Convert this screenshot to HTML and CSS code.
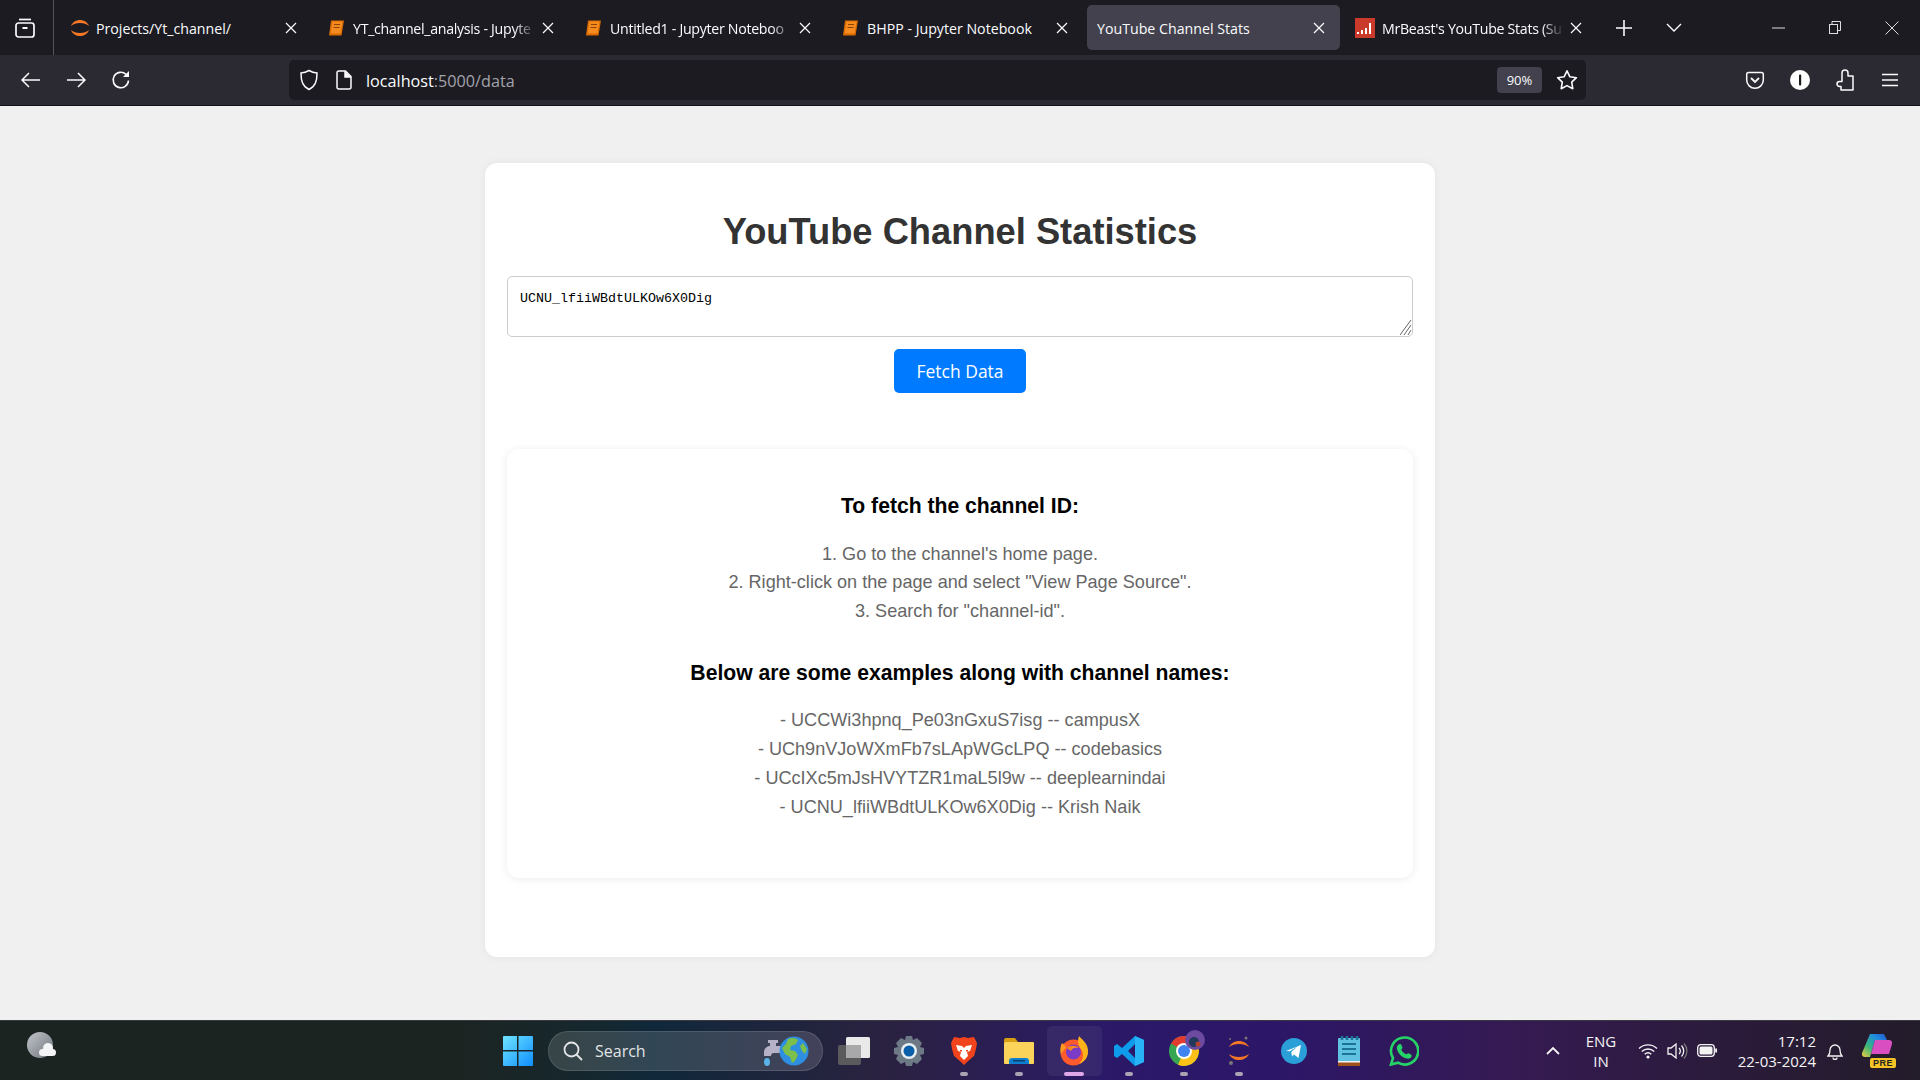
FILE: index.html
```html
<!DOCTYPE html>
<html lang="en">
<head>
<meta charset="utf-8">
<title>YouTube Channel Stats</title>
<link rel="stylesheet" href="styles.css">
</head>
<body>
<div class="tabbar">
  <div class="tabview">
    <svg width="22" height="22" viewBox="0 0 22 22" fill="none" stroke="#fbfbfe" stroke-width="1.7"><path d="M5 2.500h12"/><rect x="2" y="6" width="18" height="14" rx="2.500"/><path d="M8.500 11h5" stroke-width="2"/></svg>
  </div>
  <div class="tabs">
    <div class="tab">
      <svg class="fav" width="20" height="20" viewBox="0 0 20 20" fill="#f37726"><path d="M1 8C4 0 16 0 19 8 15 4 5 4 1 8z"/><path d="M1 12C4 20 16 20 19 12 15 16 5 16 1 12z"/></svg>
      <span class="title">Projects/Yt_channel/</span>
      <svg class="close" width="12" height="12" viewBox="0 0 12 12" stroke="#fbfbfe" stroke-width="1.200"><path d="M1 1l10 10M11 1L1 11"/></svg>
    </div>
    <div class="tab">
      <svg class="fav" width="20" height="20" viewBox="0 0 20 20"><path d="M4 2.500h13l-2.500 15H2z" fill="#d96a00"/><path d="M5.500 3.500h10l-2 12h-10z" fill="#f58a1f"/><path d="M7 6.500h6M6.500 9.500h6" stroke="#8c4300" stroke-width="1"/></svg>
      <span class="title fade">YT_channel_analysis - Jupyte</span>
      <svg class="close" width="12" height="12" viewBox="0 0 12 12" stroke="#fbfbfe" stroke-width="1.200"><path d="M1 1l10 10M11 1L1 11"/></svg>
    </div>
    <div class="tab">
      <svg class="fav" width="20" height="20" viewBox="0 0 20 20"><path d="M4 2.500h13l-2.500 15H2z" fill="#d96a00"/><path d="M5.500 3.500h10l-2 12h-10z" fill="#f58a1f"/><path d="M7 6.500h6M6.500 9.500h6" stroke="#8c4300" stroke-width="1"/></svg>
      <span class="title fade">Untitled1 - Jupyter Noteboo</span>
      <svg class="close" width="12" height="12" viewBox="0 0 12 12" stroke="#fbfbfe" stroke-width="1.200"><path d="M1 1l10 10M11 1L1 11"/></svg>
    </div>
    <div class="tab">
      <svg class="fav" width="20" height="20" viewBox="0 0 20 20"><path d="M4 2.500h13l-2.500 15H2z" fill="#d96a00"/><path d="M5.500 3.500h10l-2 12h-10z" fill="#f58a1f"/><path d="M7 6.500h6M6.500 9.500h6" stroke="#8c4300" stroke-width="1"/></svg>
      <span class="title">BHPP - Jupyter Notebook</span>
      <svg class="close" width="12" height="12" viewBox="0 0 12 12" stroke="#fbfbfe" stroke-width="1.200"><path d="M1 1l10 10M11 1L1 11"/></svg>
    </div>
    <div class="tab tab-active">
      <span class="title">YouTube Channel Stats</span>
      <svg class="close" width="12" height="12" viewBox="0 0 12 12" stroke="#fbfbfe" stroke-width="1.200"><path d="M1 1l10 10M11 1L1 11"/></svg>
    </div>
    <div class="tab">
      <svg class="fav fav-wide" width="20" height="20" viewBox="0 0 20 20"><rect width="20" height="20" fill="#c93a2b"/><path d="M2 14h2v2H2zM6 12h2v4H6zM10 10h2v6h-2zM14 5h2v11h-2z" fill="#fff"/></svg>
      <span class="title fade">MrBeast's YouTube Stats (Su</span>
      <svg class="close" width="12" height="12" viewBox="0 0 12 12" stroke="#fbfbfe" stroke-width="1.200"><path d="M1 1l10 10M11 1L1 11"/></svg>
    </div>
  </div>
  <div class="tabctl tabctl-plus">
    <svg width="16" height="16" viewBox="0 0 16 16" stroke="#fbfbfe" stroke-width="1.600"><path d="M8 0v16M0 8h16"/></svg>
  </div>
  <div class="tabctl tabctl-more">
    <svg width="16" height="10" viewBox="0 0 16 10" fill="none" stroke="#fbfbfe" stroke-width="1.400"><path d="M1 1l7 7 7-7"/></svg>
  </div>
  <div class="winctl">
    <div class="winbtn"><svg width="13" height="2" viewBox="0 0 13 2" stroke="#ddd" stroke-width="1"><path d="M0 1h13"/></svg></div>
    <div class="winbtn"><svg width="12" height="14" viewBox="0 0 12 14" fill="none" stroke="#ddd" stroke-width="1"><rect x="0.500" y="3.500" width="8" height="9"/><path d="M3 3V.5h8.500v9H9"/></svg></div>
    <div class="winbtn"><svg width="14" height="14" viewBox="0 0 14 14" stroke="#ddd" stroke-width="1"><path d="M.5.5l13 13M13.500.5l-13 13"/></svg></div>
  </div>
</div>

<div class="toolbar">
  <div class="navbtn"><svg width="20" height="16" viewBox="0 0 20 16" fill="none" stroke="#fbfbfe" stroke-width="1.500"><path d="M19 8H1M8 1L1 8l7 7"/></svg></div>
  <div class="navbtn"><svg width="20" height="16" viewBox="0 0 20 16" fill="none" stroke="#fbfbfe" stroke-width="1.500"><path d="M1 8h18M12 1l7 7-7 7"/></svg></div>
  <div class="navbtn"><svg width="20" height="20" viewBox="0 0 20 20" fill="none" stroke="#fbfbfe" stroke-width="1.600"><path d="M17.500 10.500A7.700 7.700 0 1 1 15 4.300"/><path d="M18 1v6h-6z" fill="#fbfbfe" stroke="none"/></svg></div>
  <div class="urlbar">
    <svg class="url-shield" width="20" height="22" viewBox="0 0 20 22" fill="none" stroke="#fbfbfe" stroke-width="1.500"><path d="M10 1.500c3 1.800 5 2.300 8 2.500 0 8-1.500 13-8 16.500C3.500 17 2 12 2 4c3-.2 5-.7 8-2.500z"/></svg>
    <svg class="url-doc" width="16" height="20" viewBox="0 0 16 20" fill="none" stroke="#fbfbfe" stroke-width="1.500"><path d="M3 1h6.500L15 6.500V17a2 2 0 0 1-2 2H3a2 2 0 0 1-2-2V3a2 2 0 0 1 2-2z"/><path d="M9 1v6h6" fill="#fbfbfe"/></svg>
    <span class="url-text">localhost<span class="url-dim">:5000/data</span></span>
    <span class="zoom-badge">90%</span>
    <svg class="url-star" width="22" height="22" viewBox="0 0 22 22" fill="none" stroke="#fbfbfe" stroke-width="1.600" stroke-linejoin="round"><path d="M11 1.800l2.900 6 6.500.9-4.700 4.500 1.100 6.500L11 16.600l-5.800 3.100 1.100-6.500-4.700-4.500 6.500-.9z"/></svg>
  </div>
  <div class="extras">
    <div class="navbtn"><svg width="20" height="20" viewBox="0 0 20 20" fill="none" stroke="#fbfbfe" stroke-width="1.500"><path d="M3.500 2.500h13a1.800 1.800 0 0 1 1.800 1.800V10a8.300 8.300 0 0 1-16.600 0V4.300a1.800 1.800 0 0 1 1.800-1.800z"/><path d="M6 8l4 4 4-4" stroke-width="1.800"/></svg></div>
    <div class="navbtn"><svg width="20" height="20" viewBox="0 0 20 20"><circle cx="10" cy="10" r="10" fill="#fff"/><rect x="9" y="4.500" width="2.200" height="11" rx="1" fill="#1c1b22"/></svg></div>
    <div class="navbtn"><svg width="18" height="22" viewBox="0 0 18 22" fill="none" stroke="#fbfbfe" stroke-width="1.500" stroke-linejoin="round"><path d="M6 7V4a3 3 0 0 1 6 0v3h5v14H5v-3.500H3.500a2.500 2.500 0 0 1 0-5H6z"/></svg></div>
    <div class="navbtn"><svg width="16" height="14" viewBox="0 0 16 14" stroke="#fbfbfe" stroke-width="1.500"><path d="M0 1.500h16M0 7h16M0 12.500h16"/></svg></div>
  </div>
</div>

<main class="page">
  <section class="card">
    <h1 class="heading">YouTube Channel Statistics</h1>
    <div class="input-wrap">
      <textarea class="channel-input" spellcheck="false">UCNU_lfiiWBdtULKOw6X0Dig</textarea>
      <svg class="resizer" width="12" height="16" viewBox="0 0 12 16" stroke="#666" stroke-width="1"><path d="M0 16L11 1M4 16L11 6M8 16l3-5"/></svg>
    </div>
    <button class="fetch">Fetch Data</button>
    <div class="info">
      <h3 class="info-title">To fetch the channel ID:</h3>
      <p class="info-text">1. Go to the channel's home page.<br>2. Right-click on the page and select "View Page Source".<br>3. Search for "channel-id".</p>
      <h3 class="info-title info-title-2">Below are some examples along with channel names:</h3>
      <p class="info-text">- UCCWi3hpnq_Pe03nGxuS7isg -- campusX<br>- UCh9nVJoWXmFb7sLApWGcLPQ -- codebasics<br>- UCcIXc5mJsHVYTZR1maL5l9w -- deeplearnindai<br>- UCNU_lfiiWBdtULKOw6X0Dig -- Krish Naik</p>
    </div>
  </section>
</main>

<footer class="taskbar">
  <div class="tb-left">
    <svg width="30" height="28" viewBox="0 0 30 28"><defs><linearGradient id="moon" x1="0" y1="0" x2="1" y2="1"><stop offset="0" stop-color="#c2c6cb"/><stop offset="1" stop-color="#70757c"/></linearGradient></defs><ellipse cx="13" cy="13" rx="13" ry="13" fill="url(#moon)"/><circle cx="21" cy="16" r="5" fill="#f2f4f6"/><rect x="12" y="17" width="17" height="7" rx="3.500" fill="#f2f4f6"/></svg>
  </div>
  <div class="tb-start">
    <svg width="30" height="30" viewBox="0 0 30 30"><defs><linearGradient id="win" x1="0" y1="0" x2="1" y2="1"><stop offset="0" stop-color="#6fe4ff"/><stop offset="1" stop-color="#0f8fff"/></linearGradient></defs><path d="M0 1a1 1 0 0 1 1-1h13v14H0zM15.500 0H29a1 1 0 0 1 1 1v13H15.500zM0 15.500h14V30H1a1 1 0 0 1-1-1zM15.500 15.500H30V29a1 1 0 0 1-1 1H15.500z" fill="url(#win)"/></svg>
  </div>
  <div class="tb-search">
    <svg width="20" height="20" viewBox="0 0 20 20" fill="none" stroke="#e4e6e8" stroke-width="1.800"><circle cx="8.500" cy="8.500" r="7"/><path d="M13.500 13.500l5.500 5.500"/></svg>
    <span class="tb-search-text">Search</span>
    <svg class="tb-tap" width="50" height="32" viewBox="0 0 50 32"><path d="M3 18c0-5 3-7 6-7V8H7V5h10v3h-2v3h5v7h-7c-2 0-3 1-3 3H3z" fill="#b7b1c8"/><ellipse cx="6" cy="27" rx="3" ry="4" fill="#5ab4e8"/><circle cx="33" cy="16" r="14.500" fill="#2e8fe0"/><path d="M27 4c4-2 8-1 10 1l-2 4-5 2-1 4 5 1 3 4-3 6-3 2-2-6-5-3-3-6 4-4zM42 8l4 6-2 5-3-3-2-5z" fill="#7cbf4a"/></svg>
  </div>
  <div class="tb-apps">
    <div class="app"><svg width="32" height="28" viewBox="0 0 32 28"><rect x="0" y="8" width="23" height="20" rx="2" fill="#5a5a5c"/><rect x="8" y="0" width="24" height="21" rx="1.500" fill="#e9e9ea"/><rect x="8" y="8" width="15" height="13" fill="#a8a8aa"/></svg></div>
    <div class="app"><svg width="30" height="30" viewBox="0 0 30 30"><path d="M12 0h6l1 4 4-2 5 5-2 4 4 1v6l-4 1 2 4-5 5-4-2-1 4h-6l-1-4-4 2-5-5 2-4-4-1v-6l4-1-2-4 5-5 4 2z" fill="#6d7a85"/><circle cx="15" cy="15" r="8" fill="#e8eef2"/><circle cx="15" cy="15" r="5.500" fill="#0b5fa8"/></svg></div>
    <div class="app app-dot"><svg width="26" height="30" viewBox="0 0 26 30"><path d="M3 1l6 1 4-1 4 1 6-1 3 6-1 6-2 7-7 6-3 3-3-3-7-6-2-7-1-6z" fill="#f1431c"/><path d="M5 9l6 1 2 2 2-2 6-1-2 6-3 1 1 4-4 4-4-4 1-4-3-1z" fill="#fff"/><path d="M9 14h2v1.500H9zM15 14h2v1.500h-2z" fill="#f1431c"/></svg></div>
    <div class="app app-dot"><svg width="30" height="26" viewBox="0 0 30 26"><path d="M0 2a2 2 0 0 1 2-2h9l3 4h-14z" fill="#d89f10"/><rect y="4" width="30" height="22" rx="1" fill="#fbd35a"/><path d="M5 26v-3a3 3 0 0 1 3-3h14a3 3 0 0 1 3 3v3z" fill="#0f7fd0"/><rect x="9" y="22" width="12" height="1.500" fill="#063f6e"/></svg></div>
    <div class="app app-active">
      <svg width="30" height="30" viewBox="0 0 30 30"><circle cx="14.500" cy="16.500" r="13" fill="#ff5a2b"/><path d="M20 0c2 3 10 7 9 17-.5 5-4 9-9 11 4-4 5-9 3-13-1-3-6-6-3-15z" fill="#ffb21a"/><path d="M3 7c-2 3-2 8-1 11 2-2 3-5 5-6 0-2-2-3-4-5z" fill="#ff9a1f"/><circle cx="14.500" cy="16" r="7.500" fill="#7a3bc7"/><path d="M8 12c3-3 9-3 12 0-4-1-7 0-8 3-1-1-3-2-4-3z" fill="#ff8a1a"/></svg>
    </div>
    <div class="app app-dot"><svg width="30" height="30" viewBox="0 0 30 30"><path d="M21 0l9 4v22l-9 4L8 18l-5 4-3-2V10l3-2 5 4zM21 8l-7 7 7 7z" fill="#0e9bec"/><path d="M21 0l9 4v22l-9 4z" fill="#27b3f5"/></svg></div>
    <div class="app app-dot app-chrome"><svg width="40" height="36" viewBox="0 0 40 36"><circle cx="15" cy="21" r="15" fill="#36a651"/><path d="M15 21L28 13.500A15 15 0 0 1 9 34.700z" fill="#fbc116"/><path d="M15 21L2 13.500A15 15 0 0 1 28 13.500z" fill="#e33b2e"/><circle cx="15" cy="21" r="8" fill="#fff"/><circle cx="15" cy="21" r="6" fill="#3f83f0"/><circle cx="26" cy="10" r="10" fill="#6b4aa0"/><circle cx="25" cy="12" r="5" fill="#20385a"/><circle cx="29" cy="14" r="2.500" fill="#b3402f"/></svg></div>
    <div class="app app-dot"><svg width="24" height="30" viewBox="0 0 24 30" fill="#f37726"><path d="M2 11C6 3 18 3 22 11 17 7 7 7 2 11z"/><path d="M2 18C6 26 18 26 22 18 17 22 7 22 2 18z"/><circle cx="19" cy="2" r="1.500" fill="#767677"/><circle cx="3" cy="3" r="1" fill="#767677"/><circle cx="4" cy="27" r="2" fill="#767677"/></svg></div>
    <div class="app"><svg width="26" height="26" viewBox="0 0 26 26"><circle cx="13" cy="13" r="13" fill="#2a9fd8"/><path d="M5 13l15-6-2.500 13-4.500-3.500-2 2-.7-4.500 6-5.500-7.500 4.700z" fill="#fff"/></svg></div>
    <div class="app"><svg width="22" height="30" viewBox="0 0 22 30"><rect y="2" width="22" height="28" rx="1" fill="#5fc2e0"/><rect y="26" width="22" height="4" fill="#a0521c"/><rect y="25" width="22" height="1.500" fill="#f3f3f3"/><path d="M4 8h14M4 13h14M4 18h14" stroke="#1c7396" stroke-width="2"/><path d="M4 0v4M9 0v4M14 0v4M19 0v4" stroke="#1c7396" stroke-width="2.500"/></svg></div>
    <div class="app"><svg width="30" height="30" viewBox="0 0 30 30" fill="none"><path d="M15.500 1.500A13.500 13.500 0 0 0 4 22l-2 6.500 7-1.800A13.500 13.500 0 1 0 15.500 1.500z" stroke="#25d366" stroke-width="2.600"/><path d="M10.500 8c1.500-1 2.500 2.500 3 3.500.3 1-1.500 1.500-1 2.500 1 2 2.500 3.500 4.500 4.300 1 .3 1.500-1.500 2.500-1 1 .5 3.500 1.500 3.300 2.800-.3 2-3 3-5 2.500-5-1.200-9-5-10-10-.2-2 1-4 2.700-4.600z" fill="#25d366"/></svg></div>
  </div>
  <div class="tb-tray">
    <div class="tray-chev"><svg width="14" height="9" viewBox="0 0 14 9" fill="none" stroke="#f4f4f4" stroke-width="1.800"><path d="M1 8l6-6 6 6"/></svg></div>
    <div class="tray-lang">ENG<br>IN</div>
    <div class="tray-icons">
      <svg width="20" height="16" viewBox="0 0 20 16" fill="none" stroke="#f4f4f4" stroke-width="1.400"><path d="M1 5.500a13 13 0 0 1 18 0M3.800 8.500a9 9 0 0 1 12.400 0M6.700 11.300a5 5 0 0 1 6.600 0"/><circle cx="10" cy="14" r="1.600" fill="#f4f4f4" stroke="none"/></svg>
      <svg width="21" height="18" viewBox="0 0 21 18" fill="none" stroke="#f4f4f4" stroke-width="1.300"><path d="M1 6h3l5-4v14l-5-4H1z"/><path d="M12 6a4 4 0 0 1 0 6M14.500 3.500a8 8 0 0 1 0 11"/><path d="M17 1.500a11 11 0 0 1 0 15" stroke="#777"/></svg>
      <svg width="20" height="13" viewBox="0 0 20 13" fill="none" stroke="#f4f4f4" stroke-width="1.300"><rect x=".7" y=".7" width="16.600" height="11.600" rx="3"/><rect x="2.500" y="2.500" width="13" height="8" rx="1.500" fill="#f4f4f4" stroke="none"/><rect x="18.200" y="4.500" width="1.800" height="4" fill="#f4f4f4" stroke="none"/></svg>
    </div>
    <div class="tray-clock">17:12<br>22-03-2024</div>
    <div class="tray-bell"><svg width="16" height="18" viewBox="0 0 16 18" fill="none" stroke="#f4f4f4" stroke-width="1.300"><path d="M1 14c1.500-1.500 2-2.500 2-6a5 5 0 0 1 10 0c0 3.500.5 4.500 2 6z"/><path d="M6 15.500a2 2 0 0 0 4 0"/></svg></div>
    <div class="tray-copilot">
      <svg width="30" height="24" viewBox="0 0 30 24"><defs><linearGradient id="cp" x1="0" y1="1" x2="1" y2="0"><stop offset="0" stop-color="#f7c93c"/><stop offset=".35" stop-color="#3cb878"/><stop offset=".7" stop-color="#1f8ce0"/><stop offset="1" stop-color="#2456c8"/></linearGradient></defs><path d="M8 0h14l3 6H13l-5 17H3a3 3 0 0 1-3-4z" fill="url(#cp)"/><path d="M13 6h14a3 3 0 0 1 3 4l-3 10H9z" fill="#d94fc2"/></svg>
      <span class="pre-badge">PRE</span>
    </div>
  </div>
</footer>
</body>
</html>
```

FILE: styles.css
```css
* { box-sizing: border-box; }
html, body { height: 100%; }
body {
  margin: 0;
  width: 1920px;
  height: 1080px;
  overflow: hidden;
  display: flex;
  flex-direction: column;
  background: #f0f0f0;
  font-family: "Liberation Sans", Arial, sans-serif;
}

/* Browser tab strip */
.tabbar {
  height: 55px;
  flex: none;
  display: flex;
  align-items: stretch;
  background: #1c1b22;
  color: #fbfbfe;
  font-family: "Open Sans", sans-serif;
}
.tabview {
  width: 54px;
  flex: none;
  display: flex;
  align-items: center;
  justify-content: center;
  border-right: 1px solid #55545c;
  padding-right: 4px;
}
.tabs {
  display: flex;
  gap: 4px;
  padding: 5px 0 5px 5px;
}
.tab {
  width: 253px;
  display: flex;
  align-items: center;
  padding: 0 15px 0 11px;
  border-radius: 5px;
  font-size: 14.200px;
}
.tab-active { background: #42414d; padding-left: 10px; }
.fav { flex: none; margin-right: 6px; }
.fav-wide { margin-right: 7px; }
.title {
  flex: 1;
  min-width: 0;
  padding-top: 1px;
  white-space: nowrap;
  overflow: hidden;
}
.fade {
  letter-spacing: -.3px;
  -webkit-mask-image: linear-gradient(90deg, #000 88%, transparent 100%);
  mask-image: linear-gradient(90deg, #000 88%, transparent 100%);
}
.close { flex: none; margin-left: 6px; }
.tabctl {
  display: flex;
  align-items: center;
  justify-content: center;
  flex: none;
  width: 50px;
}
.tabctl-plus { margin-left: 2px; }
.winctl {
  margin-left: auto;
  display: flex;
}
.winbtn {
  width: 56.500px;
  display: flex;
  align-items: center;
  justify-content: center;
}

/* Navigation toolbar */
.toolbar {
  height: 51px;
  flex: none;
  display: flex;
  align-items: center;
  padding: 0 0 1px 8px;
  background: #2b2a33;
  border-bottom: 1px solid #101014;
  color: #fbfbfe;
  font-family: "Open Sans", sans-serif;
}
.navbtn {
  width: 45px;
  height: 40px;
  display: flex;
  align-items: center;
  justify-content: center;
  flex: none;
}
.urlbar {
  margin-left: 146px;
  width: 1297px;
  height: 40px;
  flex: none;
  display: flex;
  align-items: center;
  padding: 0 8px 0 10px;
  background: #1c1b22;
  border-radius: 5px;
  font-size: 16.200px;
}
.url-doc { margin-left: 17px; }
.url-text { margin: 2px 0 0 14px; flex: 1; }
.url-dim { color: #a3a3aa; }
.zoom-badge {
  width: 45px;
  height: 26px;
  display: flex;
  align-items: center;
  justify-content: center;
  background: #42414d;
  border-radius: 4px;
  font-size: 13px;
}
.url-star { margin-left: 14px; }
.extras { display: flex; margin-left: 146px; }

/* Page content */
.page {
  flex: 1;
  min-height: 0;
  display: flex;
  justify-content: center;
  align-items: flex-start;
  padding-top: 57px;
  background: #f0f0f0;
}
.card {
  width: 950px;
  height: 794px;
  padding: 1px 22px 0;
  display: flex;
  flex-direction: column;
  align-items: center;
  background: #fff;
  border-radius: 12px;
  box-shadow: 0 0 8px rgba(0, 0, 0, .06);
}
.heading {
  margin: 47px 0 0;
  font-size: 36.300px;
  line-height: 42px;
  font-weight: 700;
  color: #333;
}
.input-wrap {
  position: relative;
  width: 906px;
  height: 61px;
  margin-top: 23px;
}
.channel-input {
  display: block;
  width: 100%;
  height: 100%;
  padding: 14px 12px 0;
  border: 1px solid #ccc;
  border-radius: 5px;
  resize: none;
  outline: none;
  font-family: "Liberation Mono", monospace;
  font-size: 13.333px;
  color: #000;
  background: #fff;
}
.resizer { position: absolute; right: 1px; bottom: 2px; }
.fetch {
  margin-top: 12px;
  width: 132px;
  height: 44px;
  border: 0;
  border-radius: 5px;
  background: #007bff;
  color: #fff;
  font-family: "Open Sans", sans-serif;
  font-size: 17.500px;
}
.info {
  margin-top: 56px;
  width: 906px;
  height: 429px;
  padding-top: 43px;
  text-align: center;
  background: #fff;
  border-radius: 12px;
  box-shadow: 0 1px 10px rgba(0, 0, 0, .08);
}
.info-title {
  margin: 0;
  font-size: 21.150px;
  line-height: 28px;
  font-weight: 700;
  color: #000;
}
.info-title-2 { margin-top: 32.600px; }
.info-text {
  margin: 19.700px 0 0;
  font-size: 18.100px;
  line-height: 28.800px;
  color: #666;
}

/* Windows taskbar */
.taskbar {
  height: 60px;
  flex: none;
  display: flex;
  align-items: center;
  border-top: 1px solid #3a3840;
  background: linear-gradient(90deg, #1c2422 0%, #1c2422 24%, #15282f 31%, #10283a 34%, #2a2240 46%, #2b1968 58%, #2c1668 66%, #351a52 79%, #2c1b3e 88%, #231c2a 100%);
  color: #f4f4f4;
  font-family: "Open Sans", sans-serif;
}
.tb-left {
  width: 503px;
  flex: none;
  padding: 0 0 10px 27px;
  display: flex;
}
.tb-start { width: 30px; height: 30px; flex: none; margin-right: 15px; }
.tb-search {
  width: 275px;
  height: 40px;
  flex: none;
  display: flex;
  align-items: center;
  padding: 0 11px 0 14px;
  background: rgba(255, 255, 255, .14);
  border: 1px solid rgba(255, 255, 255, .12);
  border-radius: 20px;
  font-size: 16px;
}
.tb-search-text { margin-left: 12px; color: #e2e4e6; flex: 1; }
.tb-apps { display: flex; margin-left: 3.500px; flex: none; }
.app {
  position: relative;
  width: 55px;
  height: 50px;
  display: flex;
  align-items: center;
  justify-content: center;
}
.app-dot::after,
.app-active::after {
  content: "";
  position: absolute;
  left: 50%;
  bottom: 0;
  width: 8px;
  height: 4px;
  margin-left: -4px;
  border-radius: 2px;
  background: #a9a3b4;
}
.app-active {
  background: rgba(255, 255, 255, .06);
  border-radius: 5px;
}
.app-active::after {
  width: 20px;
  margin-left: -10px;
  background: #dfa6e8;
}
.app-chrome svg { margin: -6px 0 0 10px; }
.tb-tray {
  margin-left: auto;
  display: flex;
  align-items: center;
  flex: none;
  font-size: 15px;
}
.tray-chev { width: 36px; display: flex; justify-content: center; }
.tray-lang { width: 60px; text-align: center; line-height: 20px; }
.tray-icons {
  width: 90px;
  display: flex;
  align-items: center;
  gap: 9px;
  padding-left: 7px;
}
.tray-clock { width: 95px; text-align: right; line-height: 20px; }
.tray-bell { width: 38px; display: flex; justify-content: center; }
.tray-copilot {
  position: relative;
  width: 46px;
  height: 34px;
  margin-right: 20px;
  padding: 0 0 0 8px;
}
.pre-badge {
  position: absolute;
  left: 16px;
  bottom: 0;
  padding: 0 3px;
  height: 10px;
  line-height: 10px;
  border-radius: 2px;
  background: #f7c325;
  color: #222;
  font-family: "Liberation Sans", sans-serif;
  font-size: 9px;
  font-weight: 700;
  letter-spacing: .5px;
}
```
